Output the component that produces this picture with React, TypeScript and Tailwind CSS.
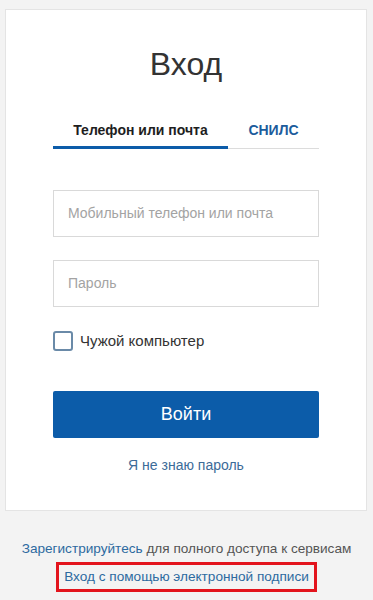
import React from 'react';

const App = () => {
  return (
    <div className="min-h-[600px] w-[373px] bg-[#f3f3f3] pt-[9px] font-['Liberation_Sans',Arial,sans-serif]">
      {/* Card */}
      <div className="ml-[5px] w-[362px] border border-[#e4e4e4] bg-white pt-[35px] pb-[35px] px-[47px]">
        <h1 className="text-center text-[32px] leading-[38px] text-[#333]">Вход</h1>

        {/* Tabs */}
        <div className="mt-[37px] flex border-b border-[#dcdcdc]">
          <div className="-mb-px w-[175px] border-b-[3px] border-[#0c5ca9] pb-[6px] text-center text-[14px] font-bold leading-[20px] text-[#1e1e1e]">
            Телефон или почта
          </div>
          <div className="flex-1 pb-[6px] text-center text-[14px] font-bold leading-[20px] text-[#1c5c9c]">
            СНИЛС
          </div>
        </div>

        {/* Inputs */}
        <div className="mt-[41px] flex h-[47px] items-center border border-[#d9d9d9] px-[14px] text-[14px] text-[#a3a3a3]">
          Мобильный телефон или почта
        </div>
        <div className="mt-[23px] flex h-[47px] items-center border border-[#d9d9d9] px-[14px] text-[14px] text-[#a3a3a3]">
          Пароль
        </div>

        {/* Checkbox */}
        <div className="mt-[24px] flex items-center gap-[7px]">
          <div className="h-[20px] w-[20px] rounded-[3px] border-2 border-[#6a8aa8]" />
          <span className="text-[15px] leading-[20px] text-[#333]">Чужой компьютер</span>
        </div>

        {/* Button */}
        <div className="mt-[40px] flex h-[47px] items-center justify-center rounded-[2px] bg-[#0c5ca9] text-[18px] text-white">
          Войти
        </div>

        <div className="mt-[17px] text-center text-[14px] leading-[20px] text-[#3c6b98]">
          Я не знаю пароль
        </div>
      </div>

      {/* Footer */}
      <div className="mt-[28px] text-center text-[13.6px] leading-[20px] text-[#555]">
        <span className="text-[#2d6aa0]">Зарегистрируйтесь</span> для полного доступа к сервисам
      </div>
      <div className="mt-[3px] flex justify-center">
        <div className="border-[3px] border-[#e3141d] px-[5px] py-[2px] text-[13.6px] leading-[20px] text-[#2d6aa0]">
          Вход с помощью электронной подписи
        </div>
      </div>
    </div>
  );
};

export default App;
